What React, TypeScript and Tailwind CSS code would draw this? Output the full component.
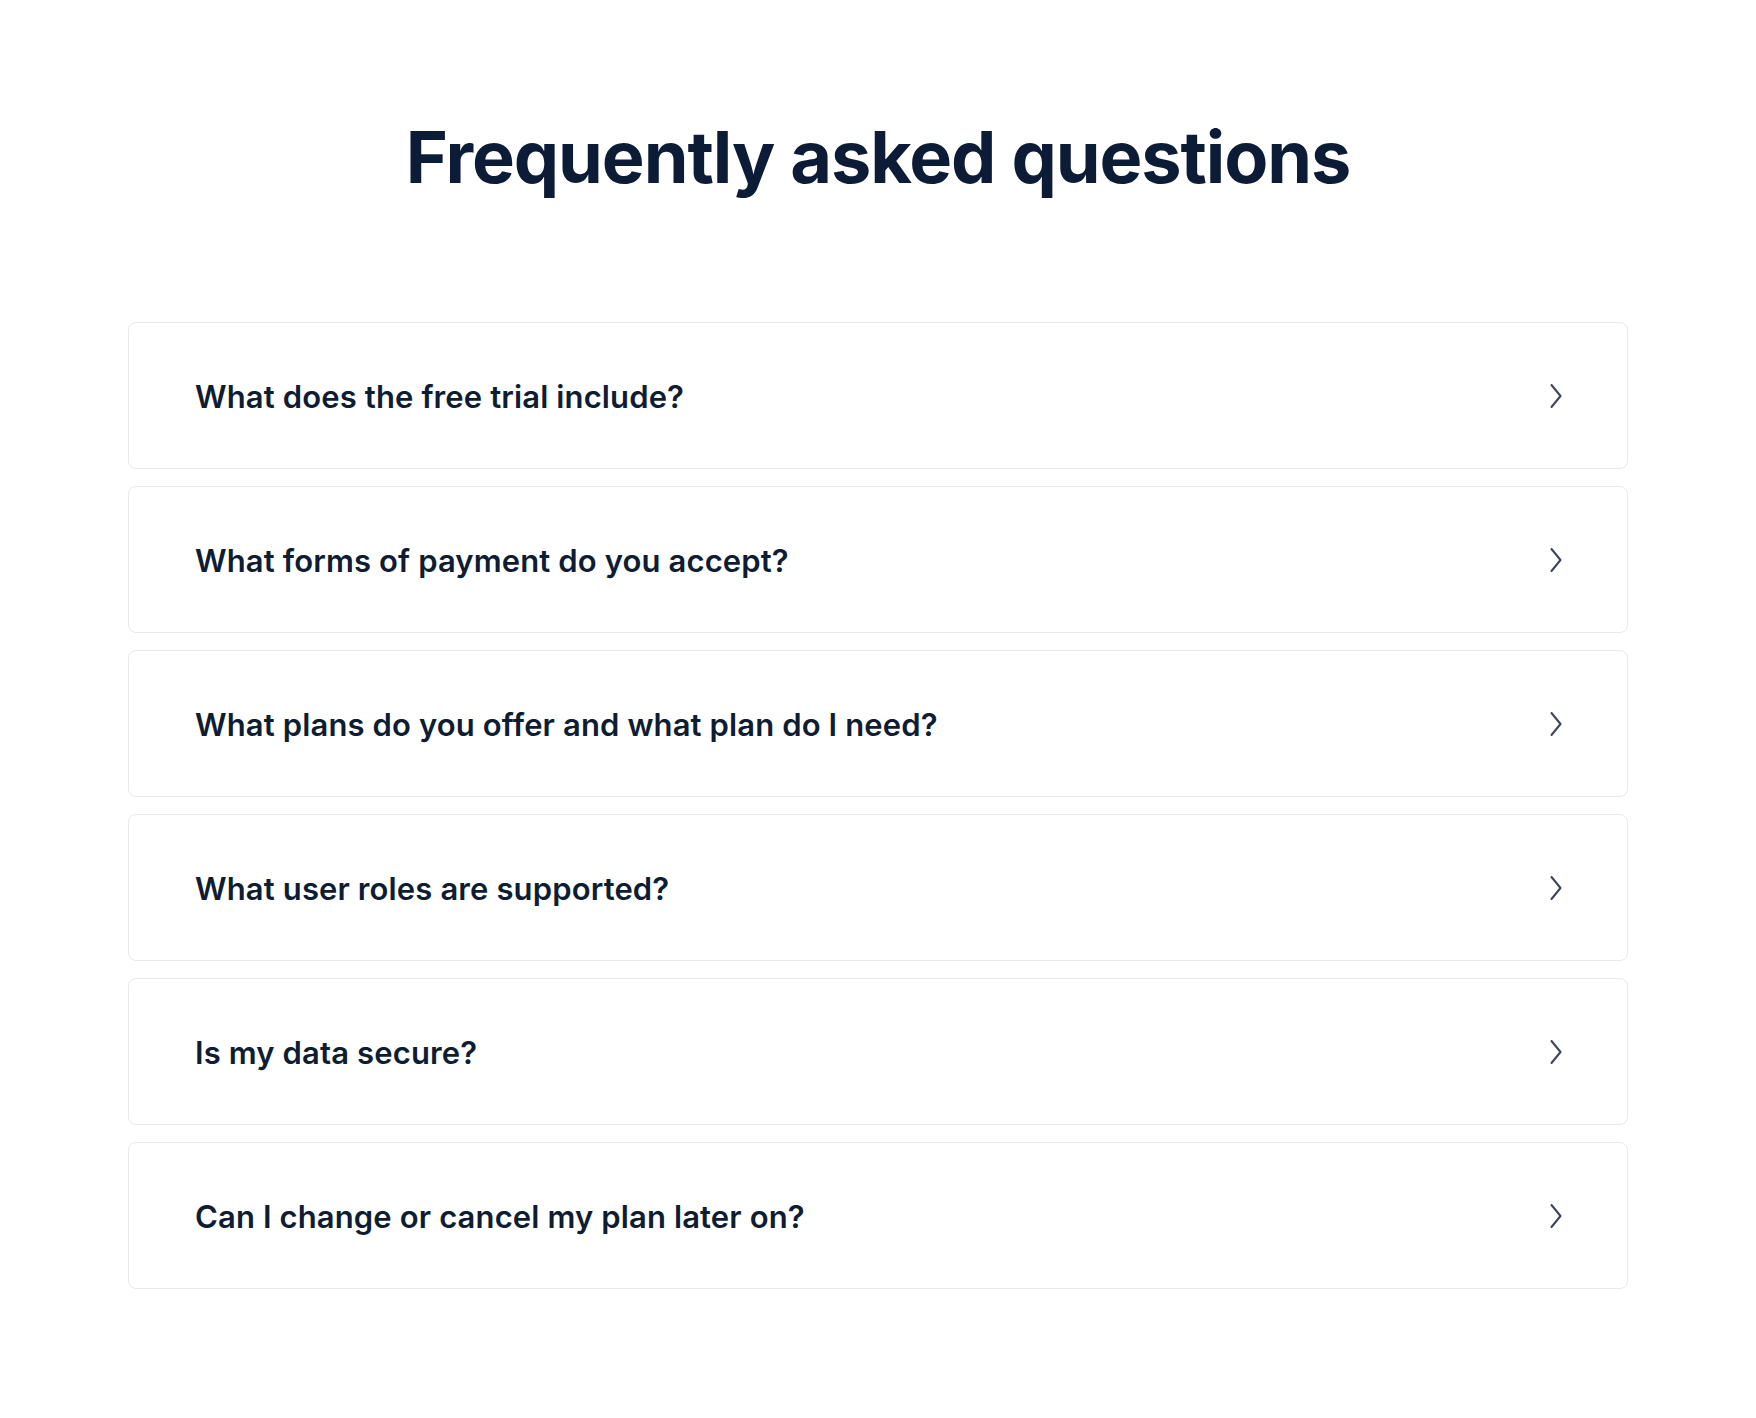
import React from "react";

const questions = [
  "What does the free trial include?",
  "What forms of payment do you accept?",
  "What plans do you offer and what plan do I need?",
  "What user roles are supported?",
  "Is my data secure?",
  "Can I change or cancel my plan later on?",
];

function Chevron() {
  return (
    <svg width="14" height="26" viewBox="0 0 14 26" fill="none" className="shrink-0">
      <path d="M2.5 2 L11.5 13 L2.5 24" stroke="#3b4556" strokeWidth="2" strokeLinecap="round" strokeLinejoin="round" />
    </svg>
  );
}

export default function App() {
  return (
    <div className="min-h-[1418px] w-full bg-white" style={{ fontFamily: "Inter, 'Noto Sans', sans-serif" }}>
      <div className="mx-auto w-[1500px] pt-[121px]">
        <h1 className="text-center text-[72px] font-bold leading-none tracking-[-0.015em] text-[#0c1c36]">
          Frequently asked questions
        </h1>
        <div className="mt-[129px] flex flex-col gap-[17px]">
          {questions.map((q) => (
            <div
              key={q}
              className="flex h-[147px] items-center justify-between rounded-[8px] border border-[#e8e9eb] bg-white pl-[66px] pr-[64px]"
            >
              <span className="pt-[3px] text-[31px] font-semibold tracking-[0.004em] text-[#0f1d33]">{q}</span>
              <Chevron />
            </div>
          ))}
        </div>
      </div>
    </div>
  );
}
